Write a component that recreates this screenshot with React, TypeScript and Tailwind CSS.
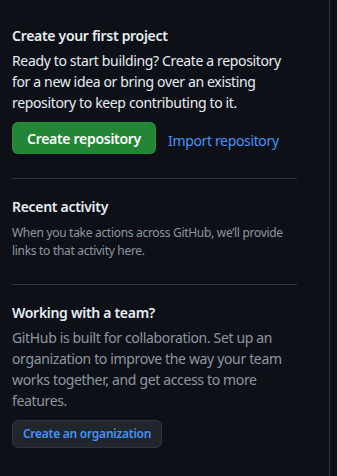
import React from "react";

export default function App() {
  return (
    <div
      className="w-[337px] h-[476px] bg-[#0d1117] flex overflow-hidden"
      style={{ fontFamily: '"Segoe UI", "Noto Sans", sans-serif' }}
    >
      <div className="w-[330px] h-full border-r border-[#30363d] pl-3 pr-8 pt-[25px]">
        <h2 className="text-[14px] leading-[21px] font-semibold tracking-[-0.3px] text-[#e6edf3] whitespace-nowrap">
          Create your first project
        </h2>
        <p className="mt-1 text-[14px] leading-[21px] tracking-[-0.35px] text-[#e6edf3] whitespace-nowrap">
          Ready to start building? Create a repository
          <br />
          for a new idea or bring over an existing
          <br />
          repository to keep contributing to it.
        </p>
        <div className="mt-[9px] flex items-center">
          <button className="w-[144px] h-8 rounded-md bg-[#238636] border border-[#2ea043]/40 text-white text-[14px] tracking-[-0.3px] font-semibold whitespace-nowrap flex items-center justify-center">
            Create repository
          </button>
          <a className="ml-3 mt-1 text-[14px] tracking-[-0.35px] text-[#4493f8] whitespace-nowrap">Import repository</a>
        </div>
        <div className="mt-6 h-px bg-[#30363d]" />
        <h2 className="mt-[17px] text-[14px] leading-[21px] font-semibold tracking-[-0.3px] text-[#e6edf3] whitespace-nowrap">
          Recent activity
        </h2>
        <p className="mt-[7px] text-[12px] leading-[18px] tracking-[-0.3px] text-[#8d96a0] whitespace-nowrap">
          When you take actions across GitHub, we’ll provide
          <br />
          links to that activity here.
        </p>
        <div className="mt-6 h-px bg-[#30363d]" />
        <h2 className="mt-[17px] text-[14px] leading-[21px] font-semibold tracking-[-0.3px] text-[#e6edf3] whitespace-nowrap">
          Working with a team?
        </h2>
        <p className="mt-1 text-[14px] leading-[21px] tracking-[-0.35px] text-[#8d96a0] whitespace-nowrap">
          GitHub is built for collaboration. Set up an
          <br />
          organization to improve the way your team
          <br />
          works together, and get access to more
          <br />
          features.
        </p>
        <button className="mt-[9px] w-[150px] h-7 rounded-md bg-[#21262d] border border-[#30363d] text-[#4493f8] text-[12px] tracking-[-0.25px] font-semibold whitespace-nowrap flex items-center justify-center">
          Create an organization
        </button>
      </div>
    </div>
  );
}
